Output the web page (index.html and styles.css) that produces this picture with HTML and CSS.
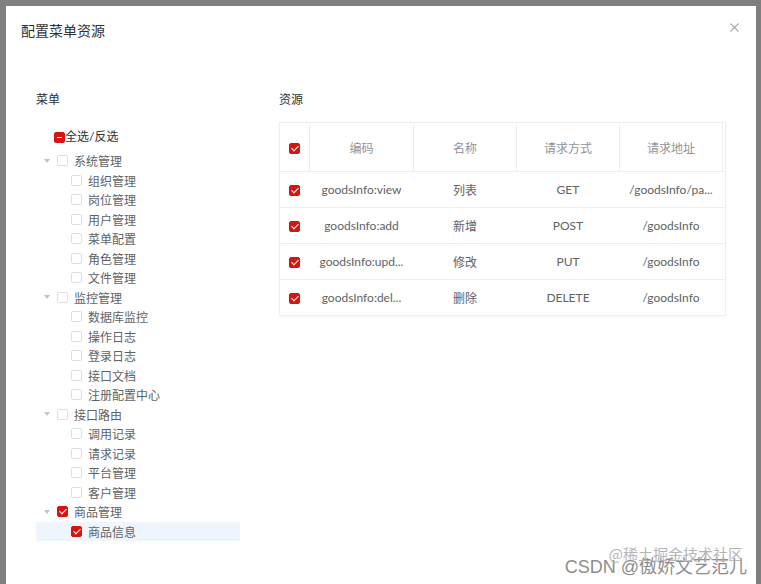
FILE: index.html
```html
<!DOCTYPE html>
<html lang="zh-CN">
<head>
    <meta charset="UTF-8">
    <meta name="viewport" content="width=device-width, initial-scale=1.0">
    <title>配置菜单资源</title>
    <link rel="stylesheet" href="styles.css">
</head>
<body>
    <div class="overlay">
        <div class="dialog">
            <div class="dialog-header">
                <span class="dialog-title">配置菜单资源</span>
                <button class="dialog-close" aria-label="关闭">
                    <svg width="9" height="9" viewBox="0 0 9 9"><path d="M0.5 0.5L8.5 8.5M8.5 0.5L0.5 8.5" stroke="#a8abb2" stroke-width="1.1" fill="none"/></svg>
                </button>
            </div>

            <div class="dialog-body">
                <div class="menu-panel">
                    <div class="panel-label">菜单</div>
                    <div class="check-all"><span class="checkbox is-indeterminate"></span>全选/反选</div>

                    <ul class="tree">
                        <li class="tree-node"><span class="expander"></span><span class="checkbox"></span><span class="node-label">系统管理</span></li>
                        <li class="tree-node leaf"><span class="expander"></span><span class="checkbox"></span><span class="node-label">组织管理</span></li>
                        <li class="tree-node leaf"><span class="expander"></span><span class="checkbox"></span><span class="node-label">岗位管理</span></li>
                        <li class="tree-node leaf"><span class="expander"></span><span class="checkbox"></span><span class="node-label">用户管理</span></li>
                        <li class="tree-node leaf"><span class="expander"></span><span class="checkbox"></span><span class="node-label">菜单配置</span></li>
                        <li class="tree-node leaf"><span class="expander"></span><span class="checkbox"></span><span class="node-label">角色管理</span></li>
                        <li class="tree-node leaf"><span class="expander"></span><span class="checkbox"></span><span class="node-label">文件管理</span></li>
                        <li class="tree-node"><span class="expander"></span><span class="checkbox"></span><span class="node-label">监控管理</span></li>
                        <li class="tree-node leaf"><span class="expander"></span><span class="checkbox"></span><span class="node-label">数据库监控</span></li>
                        <li class="tree-node leaf"><span class="expander"></span><span class="checkbox"></span><span class="node-label">操作日志</span></li>
                        <li class="tree-node leaf"><span class="expander"></span><span class="checkbox"></span><span class="node-label">登录日志</span></li>
                        <li class="tree-node leaf"><span class="expander"></span><span class="checkbox"></span><span class="node-label">接口文档</span></li>
                        <li class="tree-node leaf"><span class="expander"></span><span class="checkbox"></span><span class="node-label">注册配置中心</span></li>
                        <li class="tree-node"><span class="expander"></span><span class="checkbox"></span><span class="node-label">接口路由</span></li>
                        <li class="tree-node leaf"><span class="expander"></span><span class="checkbox"></span><span class="node-label">调用记录</span></li>
                        <li class="tree-node leaf"><span class="expander"></span><span class="checkbox"></span><span class="node-label">请求记录</span></li>
                        <li class="tree-node leaf"><span class="expander"></span><span class="checkbox"></span><span class="node-label">平台管理</span></li>
                        <li class="tree-node leaf"><span class="expander"></span><span class="checkbox"></span><span class="node-label">客户管理</span></li>
                        <li class="tree-node"><span class="expander"></span><span class="checkbox is-checked"></span><span class="node-label">商品管理</span></li>
                        <li class="tree-node leaf is-current"><span class="expander"></span><span class="checkbox is-checked"></span><span class="node-label">商品信息</span></li>
                    </ul>
                </div>

                <div class="resource-panel">
                    <div class="panel-label">资源</div>
                    <table class="resource-table">
                        <colgroup>
                            <col class="col-check">
                            <col class="col-code">
                            <col class="col-wide">
                            <col class="col-wide">
                            <col class="col-wide">
                            <col class="col-gutter">
                        </colgroup>
                        <thead>
                            <tr>
                                <th><span class="checkbox is-checked"></span></th>
                                <th>编码</th>
                                <th>名称</th>
                                <th>请求方式</th>
                                <th>请求地址</th>
                                <th class="gutter"></th>
                            </tr>
                        </thead>
                        <tbody>
                            <tr>
                                <td><span class="checkbox is-checked"></span></td>
                                <td>goodsInfo:view</td>
                                <td>列表</td>
                                <td>GET</td>
                                <td>/goodsInfo/pa...</td>
                                <td></td>
                            </tr>
                            <tr>
                                <td><span class="checkbox is-checked"></span></td>
                                <td>goodsInfo:add</td>
                                <td>新增</td>
                                <td>POST</td>
                                <td>/goodsInfo</td>
                                <td></td>
                            </tr>
                            <tr>
                                <td><span class="checkbox is-checked"></span></td>
                                <td>goodsInfo:upd...</td>
                                <td>修改</td>
                                <td>PUT</td>
                                <td>/goodsInfo</td>
                                <td></td>
                            </tr>
                            <tr>
                                <td><span class="checkbox is-checked"></span></td>
                                <td>goodsInfo:del...</td>
                                <td>删除</td>
                                <td>DELETE</td>
                                <td>/goodsInfo</td>
                                <td></td>
                            </tr>
                        </tbody>
                    </table>
                </div>
            </div>
        </div>

        <div class="watermark">
            <span class="watermark-sub">@稀土掘金技术社区</span>
            <span class="watermark-main">CSDN @傲娇文艺范儿</span>
        </div>
    </div>
</body>
</html>
```

FILE: styles.css
```css
* {
    box-sizing: border-box;
}
body {
    margin: 0;
    background-color: #7f7f7f;
    font-family: Lato, "Noto Sans CJK SC", sans-serif;
    font-size: 12px;
    color: #606266;
    overflow: hidden;
}
.overlay {
    position: relative;
    height: 584px;
    padding: 6px 5px 0 6px;
}
.dialog {
    background-color: #fff;
    height: 578px;
}

/* header */
.dialog-header {
    display: flex;
    justify-content: space-between;
    align-items: flex-start;
    padding: 15px 17px 0 15px;
}
.dialog-title {
    font-size: 14px;
    line-height: 20px;
    color: #303133;
}
.dialog-close {
    border: none;
    background: none;
    padding: 0;
    margin-top: 2px;
    width: 9px;
    height: 9px;
    display: flex;
    cursor: pointer;
}

/* body */
.dialog-body {
    display: flex;
    padding: 49px 0 0 30px;
}
.panel-label {
    font-size: 12px;
    line-height: 20px;
    color: #303133;
}
.menu-panel {
    width: 243px;
    flex-shrink: 0;
}
.resource-panel {
    flex: 1;
}

/* checkbox */
.checkbox {
    position: relative;
    display: inline-block;
    width: 11px;
    height: 11px;
    border: 1px solid #dcdfe6;
    border-radius: 2px;
    background-color: #fff;
    flex-shrink: 0;
}
.checkbox.is-checked,
.checkbox.is-indeterminate {
    background-color: #d7140f;
    border-color: #d7140f;
}
.checkbox.is-checked::after {
    content: "";
    position: absolute;
    left: 3px;
    top: 0px;
    width: 3px;
    height: 6px;
    border: 1px solid #fff;
    border-left: 0;
    border-top: 0;
    transform: rotate(45deg);
}
.checkbox.is-indeterminate::after {
    content: "";
    position: absolute;
    left: 2px;
    right: 2px;
    top: 4px;
    height: 1px;
    background-color: #fff;
}

/* tree */
.check-all {
    display: flex;
    align-items: center;
    margin-top: 17px;
    padding-left: 18px;
    line-height: 20px;
    color: #303133;
}
.tree {
    list-style: none;
    margin: 4px 0 0;
    padding: 0;
    width: 204px;
}
.tree-node {
    display: flex;
    align-items: center;
    height: 19.5px;
}
.tree-node.leaf {
    padding-left: 14px;
}
.tree-node.is-current {
    background-color: #eef5fd;
}
.expander {
    width: 21px;
    height: 19px;
    display: flex;
    align-items: center;
    justify-content: center;
}
.tree-node .expander::before {
    content: "";
    border-left: 3.5px solid transparent;
    border-right: 3.5px solid transparent;
    border-top: 4px solid #c0c4cc;
}
.tree-node.leaf .expander::before {
    display: none;
}
.node-label {
    margin-left: 6px;
    color: #606266;
}

/* table */
.resource-table {
    margin-top: 12px;
    width: 446px;
    table-layout: fixed;
    border-collapse: collapse;
    border: 1px solid #ebeef5;
    box-shadow: 0 1px 3px rgba(0, 0, 0, 0.04);
}
.col-check { width: 30px; }
.col-code { width: 104px; }
.col-wide { width: 103px; }
.col-gutter { width: 3px; }
.resource-table th,
.resource-table td {
    padding: 0;
    text-align: center;
    white-space: nowrap;
    overflow: hidden;
    font-weight: normal;
}
.resource-table th {
    height: 49px;
    color: #909399;
    border-right: 1px solid #ebeef5;
    border-bottom: 1px solid #ebeef5;
}
.resource-table th.gutter {
    border-right: none;
}
.resource-table td {
    height: 36px;
    color: #606266;
    border-bottom: 1px solid #ebeef5;
}
.resource-table .checkbox {
    vertical-align: middle;
}

/* watermark */
.watermark {
    position: absolute;
    right: 14px;
    bottom: 7px;
    text-align: right;
    pointer-events: none;
}
.watermark-main {
    display: block;
    font-family: "Liberation Sans", "Noto Sans CJK SC", sans-serif;
    font-size: 18px;
    line-height: 20px;
    color: #8d8d8d;
    text-shadow: 0 0 1px #fff;
}
.watermark-sub {
    position: absolute;
    right: 4px;
    top: -14px;
    font-family: "Noto Sans CJK SC", sans-serif;
    font-size: 15px;
    white-space: nowrap;
    color: #b5b5b5;
}
```
